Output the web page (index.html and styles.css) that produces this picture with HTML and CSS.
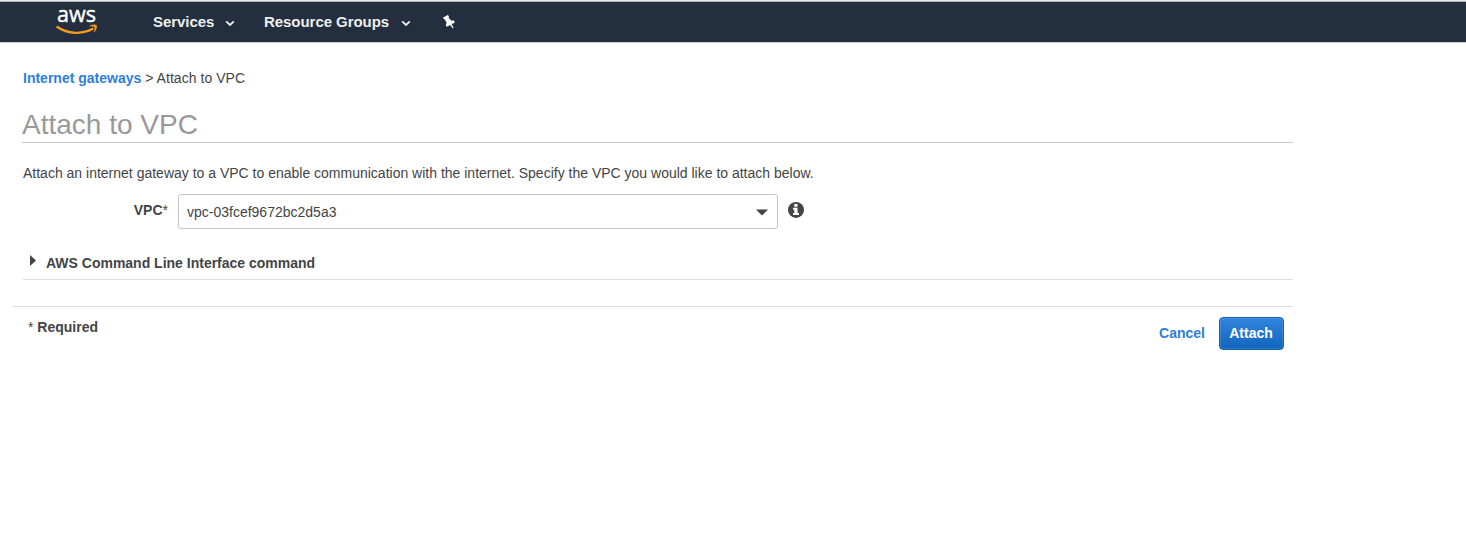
FILE: index.html
```html
<!DOCTYPE html>
<html lang="en">
<head>
<meta charset="utf-8">
<title>Attach to VPC</title>
<link rel="stylesheet" href="styles.css">
</head>
<body>
<header class="topbar">
  <svg class="logo" width="44" height="30" viewBox="0 0 44 30">
    <text class="logo-text" x="1" y="15.2" textLength="39" lengthAdjust="spacingAndGlyphs">aws</text>
    <path d="M0.6 19.5C12 27.5 27 27.6 37.2 21.6" fill="none" stroke="#f79a1e" stroke-width="2.3"/>
    <path d="M33.6 19.1C36.2 17.4 39.4 17.6 40.6 18.3C41.2 20.6 39.8 23.6 38 25.2C38.5 23 39.2 21 38.5 20C37.4 19.2 35.5 19.4 33.6 19.1Z" fill="#f79a1e" stroke="#f79a1e" stroke-width=".4"/>
  </svg>
  <nav class="menu">
    <a class="menu-item services">Services
      <svg class="chevron" width="10" height="7" viewBox="0 0 10 7"><path d="M1.2 1.3L5 4.9L8.8 1.3" fill="none" stroke="#eee" stroke-width="1.8"/></svg>
    </a>
    <a class="menu-item groups">Resource Groups
      <svg class="chevron" width="10" height="7" viewBox="0 0 10 7"><path d="M1.2 1.3L5 4.9L8.8 1.3" fill="none" stroke="#eee" stroke-width="1.8"/></svg>
    </a>
    <svg class="pin" width="14" height="16" viewBox="0 0 14 16"><path d="M1.2 3.4L5.8 1L7 2.2L6.6 3.6L9 6.4L12 6.6L12.8 8.8L9.6 10L11.6 14L10.6 14.2L8.2 11L5 12.8L3.8 11.6L4.6 8.6L2.8 5.4L1.4 4.8Z" fill="#fff"/></svg>
  </nav>
</header>
<main class="page">
  <div class="breadcrumb"><a class="link">Internet gateways</a> <span class="crumb">&gt; Attach to VPC</span></div>
  <h1 class="title">Attach to VPC</h1>
  <p class="intro">Attach an internet gateway to a VPC to enable communication with the internet. Specify the VPC you would like to attach below.</p>
  <div class="field">
    <label class="label">VPC<span class="star">*</span></label>
    <div class="select"><span>vpc-03fcef9672bc2d5a3</span>
      <svg class="caret" width="12" height="7" viewBox="0 0 12 7"><path d="M0 0.5H12L6 6.5Z" fill="#444"/></svg>
    </div>
    <svg class="info" width="17" height="17" viewBox="0 0 17 17"><circle cx="8" cy="8.9" r="8" fill="#444"/><path d="M6.3 3H9.5V5.7H6.3ZM5 6.8H9.5V12H11V14H5V12H6.3V8.7H5Z" fill="#fff"/></svg>
  </div>
  <div class="cli">
    <svg width="6" height="11" viewBox="0 0 6 11"><path d="M0 0L6 5.5L0 11Z" fill="#444"/></svg>
    <span>AWS Command Line Interface command</span>
  </div>
  <footer class="actions">
    <div class="required"><span class="star">*</span> Required</div>
    <div class="buttons"><a class="link cancel">Cancel</a><button class="attach">Attach</button></div>
  </footer>
</main>
</body>
</html>
```
FILE: styles.css
```css
body {
  margin: 0;
  background: #fff;
  color: #444;
  font: 14px/20px "Liberation Sans", Arial, sans-serif;
}
.topbar {
  box-sizing: border-box;
  height: 43px;
  border-top: 1px solid #e8e8e8;
  border-bottom: 1px solid #c8cacc;
  box-shadow: inset 0 1px #aeb3b9;
  background: #232f3e;
  display: flex;
  align-items: flex-start;
  padding: 0 0 0 56px;
}
.logo { margin-top: 6px; overflow: visible; }
.logo-text { font: 22px "Open Sans", sans-serif; fill: #fff; stroke: #fff; stroke-width: .4; }
.menu { display: flex; height: 41px; align-items: center; margin-left: 53px; }
.menu-item {
  display: flex;
  align-items: center;
  justify-content: space-between;
  color: #eee;
  font-size: 15px;
  font-weight: bold;
  letter-spacing: -.05px;
  white-space: nowrap;
}
.services { width: 82px; }
.groups { width: 147px; margin-left: 29px; }
.chevron { margin-top: 3px; }
.pin { margin-left: 31px; }
.page { width: 1280px; padding: 25px 0 0 13px; }
.breadcrumb { margin-left: 10px; }
.crumb { letter-spacing: .05px; }
.link { color: #2e7fdb; font-weight: bold; }
.title {
  margin: 16px 0 0 9px;
  height: 38px;
  border-bottom: 1px solid #c8c8c8;
  color: #999;
  font-size: 28px;
  font-weight: normal;
  line-height: 41px;
}
.intro { margin: 20px 0 0 10px; }
.field { display: flex; align-items: flex-start; margin-top: 11px; }
.label { width: 155px; margin: 6px 10px 0 0; text-align: right; font-weight: bold; }
.star { font-weight: normal; }
.select {
  box-sizing: border-box;
  width: 600px;
  height: 35px;
  border: 1px solid #c4c4c4;
  border-radius: 3px;
  display: flex;
  align-items: center;
  justify-content: space-between;
  padding: 0 9px 0 8px;
}
.caret { margin-top: 1px; }
.info { margin: 7px 0 0 10px; }
.cli {
  display: flex;
  align-items: flex-start;
  height: 26px;
  margin: 24px 0 0 10px;
  border-bottom: 1px solid #ddd;
  font-weight: bold;
}
.cli svg { margin: 2px 10px 0 7px; }
.actions {
  display: flex;
  justify-content: space-between;
  align-items: flex-start;
  margin-top: 26px;
  padding: 10px 9px 0 15px;
  border-top: 1px solid #ddd;
  font-weight: bold;
}
.buttons { display: flex; align-items: center; gap: 14px; }
.cancel { padding-bottom: 2px; }
.attach {
  box-sizing: border-box;
  width: 65px;
  height: 33px;
  padding: 0 1px 2px 0;
  border: 1px solid #1463b3;
  border-radius: 4px;
  background: linear-gradient(#3084df, #1265bd);
  box-shadow: inset 0 0 0 1px rgba(255,255,255,.12);
  color: #fff;
  font: bold 14px "Liberation Sans", Arial, sans-serif;
}
```
